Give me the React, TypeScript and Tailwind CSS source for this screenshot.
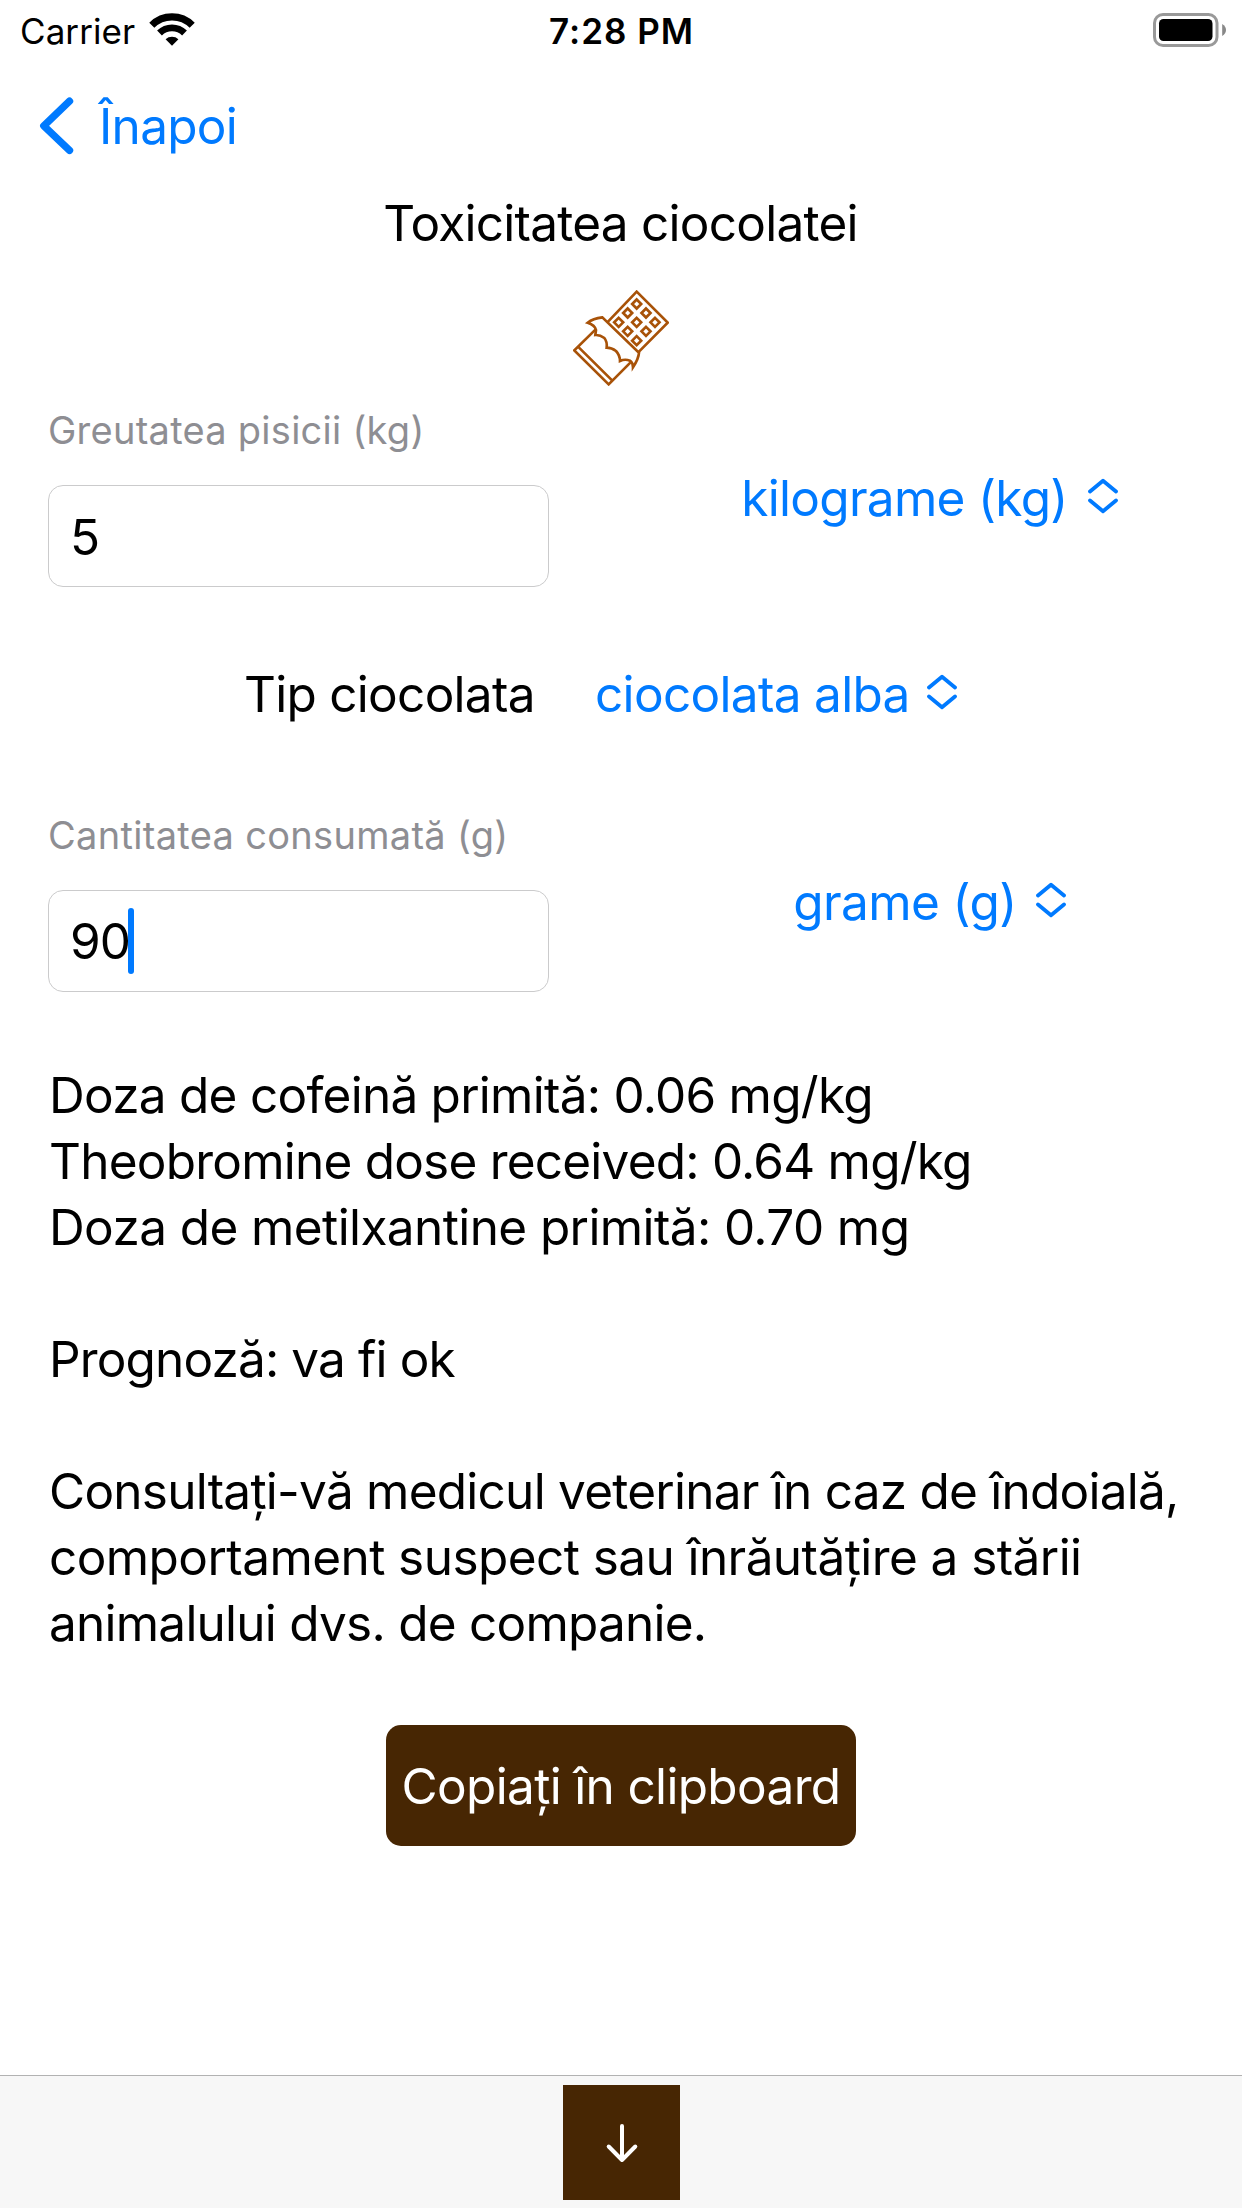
const NUTS: [number, number][] = [
  [230, 72], [203, 99], [258, 99], [176, 127], [230, 127], [285, 127], [203, 154], [258, 154], [230, 182],
];

function StatusBar() {
  return (
    <div className="flex h-[62px] items-center justify-between px-4 text-[35px] leading-10">
      <div className="flex flex-1 items-center gap-[13px] pl-1">
        <span className="whitespace-nowrap tracking-[0.075px]">Carrier</span>
        <svg width="48" height="36" viewBox="148 12 48 36" className="-mt-0.5" fill="none" stroke="black">
          <path d="M151.8 25.3A28.6 28.6 0 0 1 192.2 25.3" strokeWidth="7.2" />
          <path d="M159.5 33A17.7 17.7 0 0 1 184.5 33" strokeWidth="6.8" />
          <path d="M172 45.7L165.6 39.2A9.6 9.6 0 0 1 178.4 39.2Z" fill="black" stroke="none" />
        </svg>
      </div>
      <span className="whitespace-nowrap pr-[3px] font-semibold tracking-[1px]">7:28 PM</span>
      <div className="flex flex-1 items-center justify-end">
        <svg width="73" height="34" viewBox="0 0 73 34" className="-mt-0.5">
          <rect x="1.5" y="1.5" width="62.5" height="31" rx="8.5" fill="none" stroke="#999" strokeWidth="3" />
          <rect x="6" y="6" width="53.5" height="22" rx="4.5" fill="black" />
          <path d="M69.2 11Q73 13.5 73 17T69.2 23Z" fill="#888" />
        </svg>
      </div>
    </div>
  );
}

function ChocolateIcon() {
  return (
    <svg width="96" height="96" viewBox="39 30 288 288" fill="none" stroke="#a85208" strokeWidth="8" className="mx-auto mt-[34px]">
      <path d="M142 127L230 35L323 128L234 218" />
      {NUTS.map(([x, y]) => (
        <path key={`${x}-${y}`} d={`M${x} ${y - 13.5}l13.5 13.5l-13.5 13.5l-13.5 -13.5Z`} />
      ))}
      <path d="M83 128Q99 115 127 112L237 218Q236 236 219 262Q219 248 210 242Q195 236 180 243Q180 226 168 213Q155 203 140 203Q142 185 133 174Q120 164 106 165L108 150Q105 135 83 128Z" />
      <path d="M107 148L43 211L146 313L211 248M54 200L157 302" />
    </svg>
  );
}

function UpDown() {
  return (
    <svg width="30" height="36" viewBox="0 0 30 36" className="-mt-1" fill="none" stroke="#007aff" strokeWidth="3.8" strokeLinecap="round" strokeLinejoin="round">
      <path d="M2 13.5L15 2.7L28 13.5M2 22.5L15 33.3L28 22.5" />
    </svg>
  );
}

export default function App() {
  return (
    <div className="flex h-[2208px] w-[1242px] flex-col overflow-hidden bg-white font-['Inter',sans-serif] text-[49.5px] leading-[66px] text-black">
      <StatusBar />
      <nav className="flex h-32 items-center pl-[39px] text-[#007aff]">
        <svg width="36" height="58" viewBox="39 97 36 58" fill="none" stroke="#007aff" strokeWidth="7.4" strokeLinecap="round" strokeLinejoin="round">
          <path d="M69.5 101.2L43.8 125.8L69.5 150.4" />
        </svg>
        <span className="ml-6 tracking-[-0.7px]">Înapoi</span>
      </nav>
      <h1 className="pr-px text-center tracking-[-0.75px]">Toxicitatea ciocolatei</h1>
      <ChocolateIcon />

      <section className="mt-5 flex h-[182px] pl-12">
        <div className="w-[501px] shrink-0">
          <div className="whitespace-nowrap text-[38px] leading-[48px] tracking-[0.26px] text-[#8e8e93]">Greutatea pisicii (kg)</div>
          <div className="mt-[31px] flex h-[102px] items-center rounded-[15px] border border-[#cbcbcc] pl-[21px] pt-0.5">5</div>
        </div>
        <div className="flex flex-1 items-center justify-center gap-5 pl-[68px] pt-0.5 text-[#007aff]">
          <span className="whitespace-nowrap tracking-[-0.7px]">kilograme (kg)</span>
          <UpDown />
        </div>
      </section>

      <section className="mb-[11px] flex h-[212px] items-center pl-[244px]">
        <span className="w-[351px] whitespace-nowrap tracking-[-0.72px]">Tip ciocolata</span>
        <span className="w-[332px] whitespace-nowrap tracking-[-0.68px] text-[#007aff]">ciocolata alba</span>
        <UpDown />
      </section>

      <section className="flex h-[182px] pl-12">
        <div className="w-[501px] shrink-0">
          <div className="whitespace-nowrap text-[38px] leading-[48px] tracking-[0.31px] text-[#8e8e93]">Cantitatea consumată (g)</div>
          <div className="mt-[31px] flex h-[102px] items-center rounded-[15px] border border-[#cbcbcc] pl-[21px]">
            <span className="relative tracking-[-1px]">
              90
              <span className="absolute left-[58px] top-0 h-[66px] w-1.5 rounded-full bg-[#007aff]" />
            </span>
          </div>
        </div>
        <div className="flex flex-1 items-center justify-center gap-[19px] pl-[68px] text-[#007aff]">
          <span className="whitespace-nowrap tracking-[-0.6px]">grame (g)</span>
          <UpDown />
        </div>
      </section>

      <section className="mt-[69px] whitespace-nowrap pl-[49px]">
        <p className="tracking-[-0.74px]">Doza de cofeină primită: 0.06 mg/kg</p>
        <p className="tracking-[-0.775px]">Theobromine dose received: 0.64 mg/kg</p>
        <p className="tracking-[-0.6px]">Doza de metilxantine primită: 0.70 mg</p>
        <p className="mt-[66px] tracking-[-0.864px]">Prognoză: va fi ok</p>
        <p className="mt-[66px] tracking-[-0.755px]">Consultați-vă medicul veterinar în caz de îndoială,</p>
        <p className="tracking-[-0.57px]">comportament suspect sau înrăutățire a stării</p>
        <p className="tracking-[-0.76px]">animalului dvs. de companie.</p>
      </section>

      <button className="mx-auto mt-[69px] h-[121px] w-[470px] rounded-[15px] bg-[#472603] text-center tracking-[-0.66px] whitespace-nowrap text-white">
        Copiați în clipboard
      </button>

      <footer className="mt-auto flex h-[133px] justify-center border-t border-[#b2b2b2] bg-[#f7f7f7] pt-[9px]">
        <div className="flex h-[115px] w-[117px] items-center justify-center bg-[#472603]">
          <svg width="36" height="40" viewBox="0 0 36 40" fill="none" stroke="white" strokeWidth="4" strokeLinecap="round" strokeLinejoin="round">
            <path d="M19 3V37M5.7 23.5L19 37L32.3 23.5" />
          </svg>
        </div>
      </footer>
    </div>
  );
}
